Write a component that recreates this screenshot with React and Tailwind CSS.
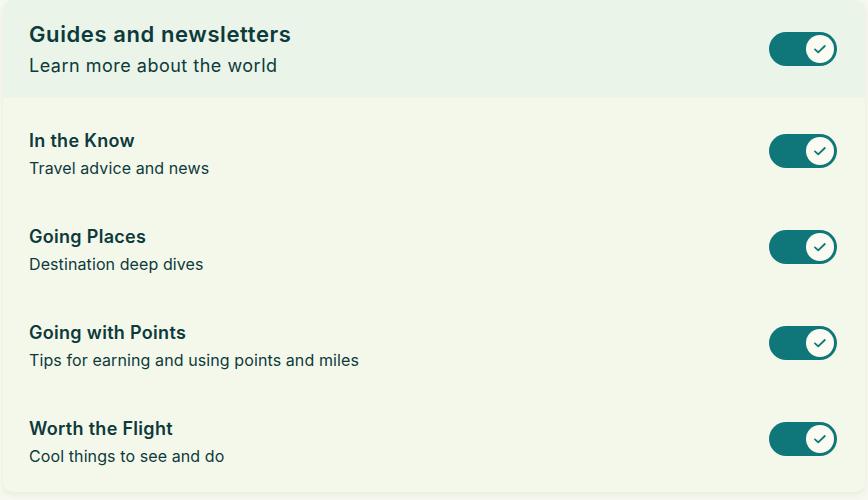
const ROWS = [
  { title: "In the Know", desc: "Travel advice and news" },
  { title: "Going Places", desc: "Destination deep dives" },
  { title: "Going with Points", desc: "Tips for earning and using points and miles" },
  { title: "Worth the Flight", desc: "Cool things to see and do" },
];

function Toggle({ className = "" }) {
  return (
    <button
      type="button"
      role="switch"
      aria-checked="true"
      className={`flex h-[34px] w-[68px] shrink-0 items-center justify-end rounded-full bg-[#0f777a] pr-[3px] ${className}`}
    >
      <span className="flex h-[28px] w-[28px] items-center justify-center rounded-full bg-[#fbfcf1]">
        <svg width="16" height="16" viewBox="0 0 16 16" fill="none">
          <path
            d="M3 8.4l3.2 3 6.6-6.4"
            stroke="#0f777a"
            strokeWidth="1.8"
            strokeLinecap="round"
            strokeLinejoin="round"
          />
        </svg>
      </span>
    </button>
  );
}

export default function App() {
  return (
    <div
      className="min-h-[500px] w-[868px] bg-[#f7f9ef] px-[3px] pb-[4px] text-[#0d3a3b]"
      style={{ fontFamily: "Inter, 'Noto Sans', sans-serif" }}
    >
      <div className="overflow-hidden rounded-[10px] bg-[#f4f8eb] pb-[10px] shadow-[0_3px_6px_rgba(60,80,40,0.08)]">
        <div className="flex h-[98px] items-center justify-between bg-[#eaf4e8] pl-[26px] pr-[28px]">
          <div>
            <div className="text-[22px] font-semibold leading-[28px] tracking-[0.6px]">
              Guides and newsletters
            </div>
            <div className="mt-[5px] text-[18px] leading-[26px] tracking-[0.5px]">
              Learn more about the world
            </div>
          </div>
          <Toggle />
        </div>

        {ROWS.map((row) => (
          <div
            key={row.title}
            className="flex h-[96px] items-center justify-between pl-[26px] pr-[28px] pt-[16px]"
          >
            <div>
              <div className="text-[18px] font-semibold leading-6 tracking-[0.3px]">{row.title}</div>
              <div className="mt-[3px] text-[16px] leading-6 tracking-[0.1px]">{row.desc}</div>
            </div>
            <Toggle className="mb-[6px]" />
          </div>
        ))}
      </div>
    </div>
  );
}
